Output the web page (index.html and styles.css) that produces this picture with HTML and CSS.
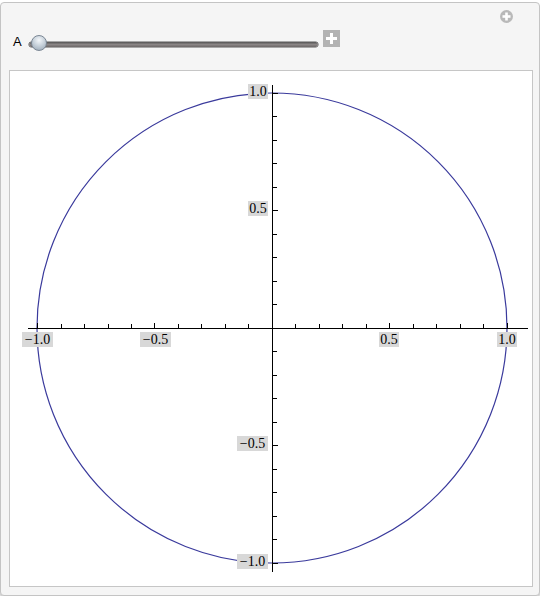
FILE: index.html
```html
<!DOCTYPE html>
<html>
<head>
<meta charset="utf-8">
<link rel="stylesheet" href="styles.css">
</head>
<body>
<div class="panel">
  <div class="top-row">
    <svg class="corner-icon" width="13" height="13" viewBox="0 0 13 13">
      <circle cx="6.5" cy="6.5" r="6.5" fill="#b9b9b9"/>
      <rect x="5.2" y="2.5" width="2.6" height="8" fill="#fff"/>
      <rect x="2.5" y="5.2" width="8" height="2.6" fill="#fff"/>
    </svg>
  </div>
  <div class="control-row">
    <span class="ctl-label">A</span>
    <div class="slider">
      <div class="track"></div>
      <div class="thumb"></div>
    </div>
    <svg class="plus-btn" width="17" height="17" viewBox="0 0 17 17">
      <rect x="0" y="0" width="17" height="17" fill="#b3b3b3"/>
      <rect x="7" y="3" width="3" height="11" fill="#fff"/>
      <rect x="3" y="7" width="11" height="3" fill="#fff"/>
    </svg>
  </div>
  <div class="frame">
    <svg class="plot" width="522" height="515" viewBox="0 0 522 515">
      <circle cx="262" cy="257" r="235" fill="none" stroke="#3a3a9c" stroke-width="1.2"/>
      <g stroke="#000" stroke-width="1" shape-rendering="crispEdges">
        <line x1="18" y1="257.5" x2="518" y2="257.5"/>
        <line x1="262.5" y1="14" x2="262.5" y2="501"/>
        <path d="M27.5 257v-5 M51 257v-4 M74.5 257v-4 M98 257v-4 M121.5 257v-4 M144.5 257v-5 M168.5 257v-4 M191.5 257v-4 M215.5 257v-4 M238.5 257v-4 M285.5 257v-4 M309.5 257v-4 M332.5 257v-4 M356.5 257v-4 M379.5 257v-5 M403.5 257v-4 M426.5 257v-4 M450.5 257v-4 M473.5 257v-4 M497.5 257v-5"/>
        <path d="M263 22.5h5 M263 45.5h4 M263 69.5h4 M263 92.5h4 M263 116.5h4 M263 139.5h5 M263 163.5h4 M263 186.5h4 M263 210.5h4 M263 233.5h4 M263 280.5h4 M263 304.5h4 M263 327.5h4 M263 351.5h4 M263 374.5h5 M263 398.5h4 M263 421.5h4 M263 445.5h4 M263 468.5h4 M263 492.5h5"/>
      </g>
      <g class="labels">
        <rect x="238" y="13" width="20" height="15"/>
        <text x="248" y="25">1.0</text>
        <rect x="238" y="130" width="20" height="15"/>
        <text x="248" y="142">0.5</text>
        <rect x="227" y="365" width="31" height="15"/>
        <text x="242.5" y="377">−0.5</text>
        <rect x="227" y="483" width="31" height="15"/>
        <text x="242.5" y="495">−1.0</text>
        <rect x="12" y="261" width="31" height="15"/>
        <text x="27.5" y="273">−1.0</text>
        <rect x="130" y="261" width="31" height="15"/>
        <text x="145.5" y="273">−0.5</text>
        <rect x="369" y="261" width="20" height="15"/>
        <text x="379" y="273">0.5</text>
        <rect x="487" y="261" width="20" height="15"/>
        <text x="497" y="273">1.0</text>
      </g>
    </svg>
  </div>
</div>
</body>
</html>
```

FILE: styles.css
```css
html, body {
  margin: 0;
  padding: 0;
  background: #ffffff;
}

body {
  padding-top: 2px;
  font-family: "Liberation Sans", Arial, sans-serif;
}

.panel {
  box-sizing: border-box;
  width: 540px;
  height: 594px;
  background: #f5f5f5;
  border: 1px solid #c4c4c4;
  border-radius: 4px;
  padding: 0 6px 0 8px;
  box-shadow: 0 2px 0 #d4d4d4;
  display: flex;
  flex-direction: column;
}

.top-row {
  display: flex;
  justify-content: flex-end;
  padding-top: 7px;
  height: 13px;
  padding-right: 20px;
}

.corner-icon {
  display: block;
}

.control-row {
  display: flex;
  align-items: flex-start;
  margin-top: 7px;
  padding-left: 4px;
  height: 23px;
}

.ctl-label {
  display: block;
  width: 9px;
  font-size: 13px;
  line-height: 16px;
  margin-top: 4px;
  color: #000;
}

.slider {
  position: relative;
  width: 289px;
  height: 18px;
  margin-left: 7px;
  margin-top: 5px;
}

.track {
  margin-top: 7px;
  height: 5px;
  border-radius: 3px;
  background: linear-gradient(#555 0%, #8a8585 50%, #6d6868 100%);
  box-shadow: 0 0 0 0.5px #5a5a5a;
}

.thumb {
  position: absolute;
  left: 2px;
  top: 0;
  width: 16px;
  height: 16px;
  box-sizing: border-box;
  border-radius: 50%;
  border: 1px solid #7b8794;
  background: radial-gradient(circle at 50% 30%, #f4f7fa 0%, #c9d3dc 45%, #96a4b2 100%);
}

.plus-btn {
  display: block;
  margin-left: 5px;
  margin-top: 0;
}

.frame {
  margin-top: 17px;
  width: 524px;
  height: 517px;
  box-sizing: border-box;
  border: 1px solid #c6c6c6;
  background: #ffffff;
}

.plot {
  display: block;
}

.labels rect {
  fill: #d8d8d8;
}

.labels text {
  font-family: "Liberation Serif", "Times New Roman", serif;
  font-size: 14px;
  fill: #000;
  text-anchor: middle;
}
```
